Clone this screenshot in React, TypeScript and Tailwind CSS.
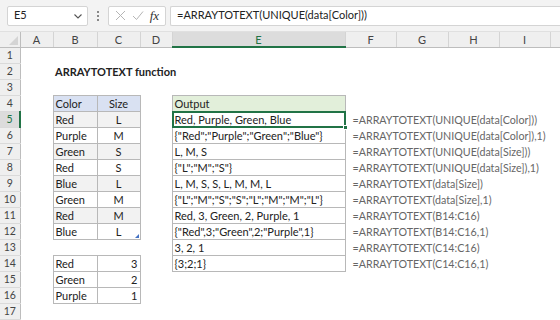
import React from 'react'

type Cell = {
  text?: string
  bold?: boolean
  align?: 'left' | 'center' | 'right'
  bg?: string
  border?: boolean
  muted?: boolean
  selected?: boolean
  handle?: boolean
}

const COLS = ['A', 'B', 'C', 'D', 'E', 'F', 'G', 'H', 'I']
const WIDTHS = [33, 44, 43, 32, 173, 51, 52, 51, 51]

const colorRows: [string, string][] = [
  ['Red', 'L'],
  ['Purple', 'M'],
  ['Green', 'S'],
  ['Red', 'S'],
  ['Blue', 'L'],
  ['Green', 'M'],
  ['Red', 'M'],
  ['Blue', 'L'],
]

const outputs = [
  'Red, Purple, Green, Blue',
  '{"Red";"Purple";"Green";"Blue"}',
  'L, M, S',
  '{"L";"M";"S"}',
  'L, M, S, S, L, M, M, L',
  '{"L";"M";"S";"S";"L";"M";"M";"L"}',
  'Red, 3, Green, 2, Purple, 1',
  '{"Red",3;"Green",2;"Purple",1}',
  '3, 2, 1',
  '{3;2;1}',
]

const formulas = [
  '=ARRAYTOTEXT(UNIQUE(data[Color]))',
  '=ARRAYTOTEXT(UNIQUE(data[Color]),1)',
  '=ARRAYTOTEXT(UNIQUE(data[Size]))',
  '=ARRAYTOTEXT(UNIQUE(data[Size]),1)',
  '=ARRAYTOTEXT(data[Size])',
  '=ARRAYTOTEXT(data[Size],1)',
  '=ARRAYTOTEXT(B14:C16)',
  '=ARRAYTOTEXT(B14:C16,1)',
  '=ARRAYTOTEXT(C14:C16)',
  '=ARRAYTOTEXT(C14:C16,1)',
]

const counts: [string, string][] = [
  ['Red', '3'],
  ['Green', '2'],
  ['Purple', '1'],
]

function buildRows(): Cell[][] {
  const rows: Cell[][] = []
  for (let r = 1; r <= 17; r++) {
    const row: Cell[] = COLS.map(() => ({}))
    if (r === 2) row[1] = { text: 'ARRAYTOTEXT function', bold: true }
    if (r === 4) {
      row[1] = { text: 'Color', bg: 'bg-[#d9e1f2]', border: true }
      row[2] = { text: 'Size', align: 'center', bg: 'bg-[#d9e1f2]', border: true }
      row[4] = { text: 'Output', bg: 'bg-[#e2efda]', border: true }
    }
    if (r >= 5 && r <= 12) {
      const [c, s] = colorRows[r - 5]
      const bg = r % 2 === 1 ? 'bg-[#f2f2f2]' : 'bg-white'
      row[1] = { text: c, bg, border: true }
      row[2] = { text: s, align: 'center', bg, border: true, handle: r === 12 }
    }
    if (r >= 14 && r <= 16) {
      const [c, n] = counts[r - 14]
      row[1] = { text: c, border: true }
      row[2] = { text: n, align: 'right', border: true }
    }
    if (r >= 5 && r <= 14) {
      row[4] = { text: outputs[r - 5], border: true, selected: r === 5 }
      row[5] = { text: formulas[r - 5], muted: true }
    }
    rows.push(row)
  }
  return rows
}

function Chevron() {
  return (
    <svg width="10" height="10" viewBox="0 0 10 10" className="text-[#555]">
      <path d="M1.5 3.5 L5 7 L8.5 3.5" fill="none" stroke="currentColor" strokeWidth="1.1" />
    </svg>
  )
}

export default function App() {
  const rows = buildRows()

  return (
    <div className="w-[560px] h-[320px] overflow-hidden bg-white font-['Lato',sans-serif] text-[11px] text-[#222]">
      {/* Formula bar */}
      <div className="h-[32px] bg-[#f3f3f3] flex items-center gap-[4px] pl-[7px] border-b border-[#e0e0e0]">
        <div className="w-[81px] h-[20px] bg-white border border-[#d4d4d4] rounded-[2px] flex items-center justify-between pl-[6px] pr-[4px]">
          <span className="text-[11px] text-[#222]">E5</span>
          <Chevron />
        </div>
        <div className="w-[12px] flex flex-col items-center gap-[2px]">
          <span className="w-[2px] h-[2px] bg-[#888]" />
          <span className="w-[2px] h-[2px] bg-[#888]" />
          <span className="w-[2px] h-[2px] bg-[#888]" />
        </div>
        <div className="w-[58px] h-[20px] bg-white border border-[#d4d4d4] rounded-[2px] flex items-center justify-around px-[3px]">
          <svg width="11" height="11" viewBox="0 0 11 11">
            <path d="M1 1 L10 10 M10 1 L1 10" stroke="#b5b5b5" strokeWidth="1" />
          </svg>
          <svg width="12" height="11" viewBox="0 0 12 11">
            <path d="M1 6 L4.5 9.5 L11 1.5" fill="none" stroke="#b5b5b5" strokeWidth="1" />
          </svg>
          <span className="font-['Liberation_Serif',serif] italic text-[13px] text-[#333] leading-none">fx</span>
        </div>
        <div className="flex-1 min-w-0 h-[20px] bg-white border border-[#d4d4d4] border-r-0 rounded-l-[2px] flex items-center pl-[6px] text-[11px] whitespace-nowrap">
          =ARRAYTOTEXT(UNIQUE(data[Color]))
        </div>
      </div>

      <table className="table-fixed border-collapse w-[560px]">
        <colgroup>
          <col className="w-[20px]" />
          {WIDTHS.map((w, i) => (
            <col key={i} style={{ width: w }} />
          ))}
          <col className="w-[10px]" />
        </colgroup>
        <thead>
          <tr className="h-[15px]">
            <th className="relative bg-[#efefef] border-r border-b border-[#bdbdbd] p-0">
              <svg width="9" height="9" viewBox="0 0 9 9" className="absolute right-[2px] bottom-[2px]">
                <path d="M9 0 L9 9 L0 9 Z" fill="#d4d4d4" />
              </svg>
            </th>
            {COLS.map((c) => (
              <th
                key={c}
                className={
                  c === 'E'
                    ? 'bg-[#dcdcdc] border-b-2 border-b-[#217346] border-r border-r-[#d4d4d4] p-0 text-[11px] font-normal text-[#217346] leading-[13px]'
                    : 'bg-[#efefef] border-b border-b-[#bdbdbd] border-r border-r-[#d4d4d4] p-0 text-[11px] font-normal text-[#444] leading-[13px]'
                }
              >
                {c}
              </th>
            ))}
            <th className="bg-[#efefef] border-b border-[#bdbdbd] p-0" />
          </tr>
        </thead>
        <tbody>
          {rows.map((row, ri) => {
            const r = ri + 1
            return (
              <tr key={r} className="h-[16px]">
                <td
                  className={
                    r === 5
                      ? 'bg-[#dcdcdc] border-r-2 border-r-[#217346] border-b border-b-[#dadada] p-0 text-center text-[10.5px] text-[#217346] leading-[15px]'
                      : 'bg-[#efefef] border-r border-r-[#bdbdbd] border-b border-b-[#dadada] p-0 text-center text-[10.5px] text-[#444] leading-[15px]'
                  }
                >
                  {r}
                </td>
                {row.map((cell, ci) => (
                  <td
                    key={ci}
                    className={[
                      'p-0 whitespace-nowrap leading-[15px] relative',
                      cell.muted ? 'pl-[7px] text-[10.7px] text-[#666]' : 'px-[2px]',
                      cell.border ? 'border border-[#b8b8b8]' : '',
                      cell.bg ?? '',
                      cell.bold ? 'font-bold' : '',
                      cell.align === 'center' ? 'text-center' : cell.align === 'right' ? 'text-right' : 'text-left',
                    ].join(' ')}
                  >
                    {cell.text}
                    {cell.selected && (
                      <div className="absolute -left-[1px] -top-[1px] -right-[1px] -bottom-[1px] border-2 border-[#217346]">
                        <div className="absolute -right-[4px] -bottom-[4px] w-[5px] h-[5px] bg-[#217346] border border-white" />
                      </div>
                    )}
                    {cell.handle && (
                      <svg width="4" height="4" viewBox="0 0 4 4" className="absolute right-[1px] bottom-[1px]">
                        <path d="M4 0 L4 4 L0 4 Z" fill="#4472c4" />
                      </svg>
                    )}
                  </td>
                ))}
                <td className="p-0" />
              </tr>
            )
          })}
        </tbody>
      </table>
    </div>
  )
}
